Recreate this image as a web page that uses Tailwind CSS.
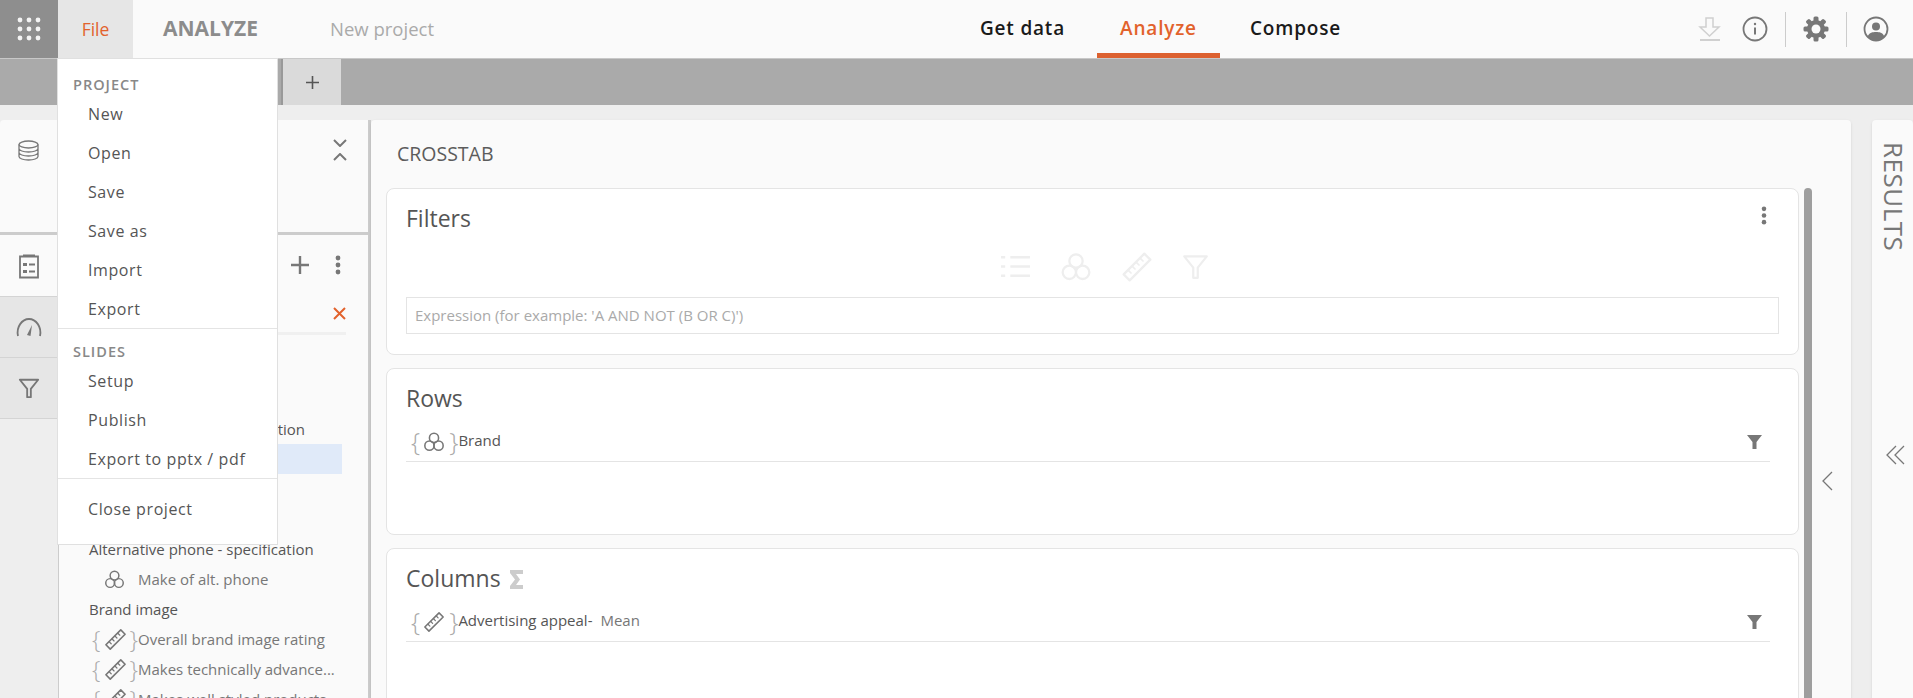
<!DOCTYPE html>
<html lang="en">
<head>
    <meta charset="UTF-8">
    <title>Crosstab</title>
    <script src="https://cdn.jsdelivr.net/npm/@tailwindcss/browser@4"></script>
</head>
<body class="h-[698px] overflow-hidden bg-[#eeeeee] font-['Open_Sans',sans-serif] text-[#666]">

<!-- shared icons -->
<svg class="hidden">
    <symbol id="rings" viewBox="0 0 24 24"><g fill="none" stroke="currentColor" stroke-width="1.7"><circle cx="12" cy="7.5" r="5"/><circle cx="7" cy="16" r="5"/><circle cx="17" cy="16" r="5"/></g></symbol>
    <symbol id="ruler" viewBox="0 0 24 24"><g fill="none" stroke="currentColor" stroke-width="1.7" stroke-linejoin="round" stroke-linecap="round"><path d="M17.5 2 22 6.5 6.5 22 2 17.5Z"/><path d="M14.5 5.5l2 2M11.5 8.5l2 2M8.5 11.5l2 2M5.5 14.5l2 2" stroke-width="1.3"/></g></symbol>
    <symbol id="funnel" viewBox="0 0 24 24"><path d="M2 3h20l-8 10v9h-4v-9Z" fill="none" stroke="currentColor" stroke-width="2" stroke-linejoin="round"/></symbol>
    <symbol id="dots" viewBox="0 0 6 20"><g fill="currentColor"><circle cx="3" cy="3" r="2.4"/><circle cx="3" cy="10" r="2.4"/><circle cx="3" cy="17" r="2.4"/></g></symbol>
</svg>

<!-- top bar -->
<header class="flex h-[59px] border-b border-[#c8c8c8] bg-[#fafafa]">
    <div class="flex w-[58px] items-center justify-center bg-[#8e8e8e]">
        <svg width="24" height="24" viewBox="0 0 24 24" fill="#f4f4f4"><circle cx="3" cy="3" r="2.4"/><circle cx="12" cy="3" r="2.4"/><circle cx="21" cy="3" r="2.4"/><circle cx="3" cy="12" r="2.4"/><circle cx="12" cy="12" r="2.4"/><circle cx="21" cy="12" r="2.4"/><circle cx="3" cy="21" r="2.4"/><circle cx="12" cy="21" r="2.4"/><circle cx="21" cy="21" r="2.4"/></svg>
    </div>
    <div class="flex w-[75px] items-center justify-center bg-[#e6e6e6] text-[17.500px] text-[#e2622c]">File</div>
    <div class="ml-[30px] flex w-[167px] items-center text-[21px] font-bold text-[#8c8c8c]">ANALYZE</div>
    <div class="flex w-[120px] items-center whitespace-nowrap text-[18.500px] text-[#aaaaaa]">New project</div>
    <nav class="ml-[530px] flex text-[19px] font-semibold tracking-[0.8px] text-[#1a1a1a]">
        <div class="flex w-[117px] items-center pb-[2px]">Get data</div>
        <div class="flex w-[123px] items-center justify-center border-b-[5px] border-[#dc6130] pt-[3px] text-[#e2622c]">Analyze</div>
        <div class="ml-[30px] flex items-center pb-[2px]">Compose</div>
    </nav>
    <div class="ml-auto flex items-center pr-[24px]">
        <svg width="24" height="24" viewBox="0 0 24 24" fill="none" stroke="#d0d0d0" stroke-width="1.5"><path d="M8 1h7v9h6l-9.500 9L2 10h6Z"/><path d="M2 23h20" stroke-width="2"/></svg>
        <svg class="ml-[20px]" width="26" height="26" viewBox="0 0 26 26" fill="none" stroke="#777" stroke-width="1.8"><circle cx="13" cy="13" r="11.500"/><path d="M13 11.500v7" stroke-width="2"/><circle cx="13" cy="8" r="1.200" fill="#777" stroke="none"/></svg>
        <div class="ml-[17px] h-[35px] w-px bg-[#cccccc]"></div>
        <svg class="ml-[17px]" width="26" height="26" viewBox="0 0 26 26"><g fill="#777"><circle cx="13" cy="13" r="9"/><rect x="10.500" y="0.500" width="5" height="25" rx="1.500"/><rect x="10.500" y="0.500" width="5" height="25" rx="1.500" transform="rotate(45 13 13)"/><rect x="10.500" y="0.500" width="5" height="25" rx="1.500" transform="rotate(90 13 13)"/><rect x="10.500" y="0.500" width="5" height="25" rx="1.500" transform="rotate(135 13 13)"/></g><circle cx="13" cy="13" r="4.500" fill="#fafafa"/></svg>
        <div class="ml-[17px] h-[35px] w-px bg-[#cccccc]"></div>
        <svg class="ml-[16px]" width="26" height="26" viewBox="0 0 26 26"><circle cx="13" cy="13" r="11.500" fill="none" stroke="#777" stroke-width="1.800"/><circle cx="13" cy="10.500" r="4" fill="#777"/><path d="M4.500 20.500c2-4 5-4.500 8.500-4.500s6.500.5 8.500 4.500c-2 2.500-5 4.500-8.500 4.500s-6.500-2-8.500-4.500Z" fill="#777"/></svg>
    </div>
</header>

<!-- tab strip -->
<div class="flex h-[46px] bg-[#aaaaaa] pl-[281px]">
    <div class="flex w-[60px] items-center justify-center border-l-2 border-[#999] bg-[#dadada] pt-px text-[#555]">
        <svg width="13" height="13" viewBox="0 0 13 13" stroke="#555" stroke-width="1.600"><path d="M6.500 0v13M0 6.500h13"/></svg>
    </div>
</div>

<main class="flex h-[593px] pt-[15px]">
    <!-- left side -->
    <div class="flex w-[371px] shrink-0 flex-col border-r-[3px] border-[#cccccc]">
        <section class="flex h-[115px] shrink-0 border-b-[3px] border-[#cccccc] bg-[#fafafa] rounded-tl">
            <div class="w-[58px] pl-[18px] pt-[20px]">
                <svg width="21" height="21" viewBox="0 0 21 21" fill="none" stroke="#777" stroke-width="1.300"><ellipse cx="10.500" cy="4.500" rx="9.500" ry="3.500"/><path d="M1 4.500v12c0 2 4.300 3.500 9.500 3.500s9.500-1.500 9.500-3.500v-12M1 8.500c0 2 4.300 3.500 9.500 3.500s9.500-1.500 9.500-3.500M1 12.500c0 2 4.300 3.500 9.500 3.500s9.500-1.500 9.500-3.500"/></svg>
            </div>
            <div class="ml-auto flex w-[37px] flex-col gap-[6px] pt-[19px] pl-[2px]">
                <svg width="14" height="8" viewBox="0 0 14 8" fill="none" stroke="#777" stroke-width="2"><path d="M1 1l6 6 6-6"/></svg>
                <svg width="14" height="8" viewBox="0 0 14 8" fill="none" stroke="#777" stroke-width="2"><path d="M1 7l6-6 6 6"/></svg>
            </div>
        </section>
        <section class="flex min-h-0 flex-1">
            <div class="w-[58px] shrink-0 bg-[#eeeeee]">
                <div class="flex h-[62px] items-center justify-center bg-[#fafafa] border-b border-[#d4d4d4]">
                    <svg width="22" height="26" viewBox="0 0 22 26" fill="none" stroke="#777" stroke-width="1.800"><path d="M5 3.500H2v21h18v-21h-3"/><rect x="5" y="1.500" width="12" height="3" fill="#777" stroke="none"/><path d="M5 10h4v3H5ZM5 17h4v3H5Z" fill="#777" stroke="none"/><path d="M11 11.500h6M11 18.500h6"/></svg>
                </div>
                <div class="flex h-[61px] items-center justify-center bg-[#e6e6e6] border-b border-[#d4d4d4]">
                    <svg width="28" height="20" viewBox="0 0 28 20" fill="none" stroke="#777" stroke-width="1.800"><path d="M3 19C1 10 7 2 14 2s13 8 11 17"/><path d="M12 18l5-10-1.500 11Z" fill="#777" stroke="none"/></svg>
                </div>
                <div class="flex h-[61px] items-center justify-center bg-[#e6e6e6] border-b border-[#d4d4d4] text-[#777]">
                    <svg width="22" height="22"><use href="#funnel"/></svg>
                </div>
            </div>
            <div class="min-w-0 flex-1 border-l border-[#cccccc] bg-[#fafafa] text-[15px]">
                <div class="flex h-[59px] items-center justify-end gap-[26px] pr-[27px] text-[#777]">
                    <svg width="18" height="18" viewBox="0 0 18 18" stroke="#777" stroke-width="2.400"><path d="M9 0v18M0 9h18"/></svg>
                    <svg width="6" height="20"><use href="#dots"/></svg>
                </div>
                <div class="ml-[24px] mr-[22px] flex h-[41px] items-center justify-end border-b-[3px] border-[#f0f0f0]">
                    <svg width="13" height="13" viewBox="0 0 13 13" stroke="#e2622c" stroke-width="2"><path d="M1 1l11 11M12 1 1 12"/></svg>
                </div>
                <div class="mt-[79px] flex h-[30px] w-[246px] items-center justify-end whitespace-nowrap pt-[1px] text-[15px] font-medium text-[#555]">Device - specification</div>
                <div class="h-[30px] w-[283px] bg-[#e0eaf9]"></div>
                <div class="h-[60px]"></div>
                <div class="flex h-[30px] items-center pl-[30px] text-[15px] font-medium whitespace-nowrap text-[#555]">Alternative phone - specification</div>
                <div class="flex h-[30px] items-center whitespace-nowrap pl-[45px] text-[15px] text-[#777]">
                    <svg class="text-[#777]" width="21" height="21"><use href="#rings"/></svg>
                    <span class="ml-[13px]">Make of alt. phone</span>
                </div>
                <div class="flex h-[30px] items-center pl-[30px] pt-[1px] text-[15px] font-medium text-[#555]">Brand image</div>
                <div class="flex h-[30px] items-center whitespace-nowrap pl-[33px] text-[#777]">
                    <span class="text-[24px] font-light leading-none text-[#aaa]">{</span>
                    <svg class="ml-[4px]" width="23" height="23"><use href="#ruler"/></svg>
                    <span class="ml-[2px] text-[24px] font-light leading-none text-[#aaa]">}</span>
                    <span>Overall brand image rating</span>
                </div>
                <div class="flex h-[30px] items-center whitespace-nowrap pl-[33px] text-[#777]">
                    <span class="text-[24px] font-light leading-none text-[#aaa]">{</span>
                    <svg class="ml-[4px]" width="23" height="23"><use href="#ruler"/></svg>
                    <span class="ml-[2px] text-[24px] font-light leading-none text-[#aaa]">}</span>
                    <span>Makes technically advance...</span>
                </div>
                <div class="flex h-[30px] items-center whitespace-nowrap pl-[33px] text-[#777]">
                    <span class="text-[24px] font-light leading-none text-[#aaa]">{</span>
                    <svg class="ml-[4px]" width="23" height="23"><use href="#ruler"/></svg>
                    <span class="ml-[2px] text-[24px] font-light leading-none text-[#aaa]">}</span>
                    <span>Makes well styled products</span>
                </div>
            </div>
        </section>
    </div>

    <!-- crosstab -->
    <div class="flex min-w-0 flex-1 rounded-t bg-[#fafafa] shadow-sm">
        <div class="w-[1428px] shrink-0 pl-[15px]">
            <div class="flex h-[68px] items-center pl-[11px] text-[19.500px] font-medium text-[#5c5c5c]">CROSSTAB</div>
            <div class="relative h-[167px] rounded-[8px] border border-[#e4e4e4] bg-white px-[19px]">
                <h2 class="pt-[14px] text-[23px] leading-[30px] text-[#555]">Filters</h2>
                <svg class="absolute right-[31px] top-[17px] text-[#777]" width="6" height="19"><use href="#dots"/></svg>
                <div class="mt-[21px] flex h-[25px] items-center justify-center gap-[29px] pl-[24px] text-[#eeeeee]">
                    <svg width="31" height="25" viewBox="0 0 30 24" fill="none" stroke="currentColor" stroke-width="2.500"><path d="M1 3h4M10 3h19M1 12h4M10 12h19M1 21h4M10 21h19"/></svg>
                    <svg width="32" height="32"><use href="#rings"/></svg>
                    <svg width="32" height="32"><use href="#ruler"/></svg>
                    <svg width="27" height="27"><use href="#funnel"/></svg>
                </div>
                <div class="mt-[18px] flex h-[37px] items-center border border-[#e4e4e4] pl-[8px] text-[15px] text-[#aaaaaa]">Expression (for example: 'A AND NOT (B OR C)')</div>
            </div>
            <div class="mt-[13px] h-[167px] rounded-[8px] border border-[#e4e4e4] bg-white px-[19px]">
                <h2 class="pt-[14px] text-[23px] leading-[30px] text-[#555]">Rows</h2>
                <div class="mr-[9px] mt-[12px] flex h-[37px] items-center border-b border-[#e4e4e4] pb-[2px] text-[15px] text-[#555]">
                    <span class="mb-[2px] ml-[5px] text-[26px] font-light leading-none text-[#aaa]">{</span>
                    <svg class="ml-[3px] text-[#777]" width="22" height="22"><use href="#rings"/></svg>
                    <span class="mb-[2px] ml-[4px] text-[26px] font-light leading-none text-[#aaa]">}</span>
                    <span class="mb-[3px]">Brand</span>
                    <svg class="ml-auto mr-[8px]" width="15" height="14" viewBox="0 0 15 14" fill="#777"><path d="M0 0h15L9.500 7v7h-4V7Z"/></svg>
                </div>
            </div>
            <div class="mt-[13px] h-[167px] rounded-t-[8px] border border-[#e4e4e4] bg-white px-[19px]">
                <h2 class="flex items-center gap-[9px] pt-[14px] text-[23px] leading-[30px] text-[#555]">Columns
                    <svg class="mt-[3px]" width="13" height="19" viewBox="0 0 13 19" fill="#cccccc"><path d="M0 0h13v4H6l4 5.500L6 15h7v4H0v-3l5-6.500L0 3Z"/></svg>
                </h2>
                <div class="mr-[9px] mt-[12px] flex h-[37px] items-center border-b border-[#e4e4e4] pb-[2px] text-[15px] text-[#555]">
                    <span class="mb-[2px] ml-[5px] text-[26px] font-light leading-none text-[#aaa]">{</span>
                    <svg class="ml-[3px] text-[#777]" width="22" height="22"><use href="#ruler"/></svg>
                    <span class="mb-[2px] ml-[4px] text-[26px] font-light leading-none text-[#aaa]">}</span>
                    <span class="mb-[3px]">Advertising appeal-</span>
                    <span class="mb-[3px] ml-[8px] text-[#777]">Mean</span>
                    <svg class="ml-auto mr-[8px]" width="15" height="14" viewBox="0 0 15 14" fill="#777"><path d="M0 0h15L9.500 7v7h-4V7Z"/></svg>
                </div>
            </div>
        </div>
        <div class="ml-[5px] mt-[68px] w-[8px] rounded-t bg-[#9e9e9e]"></div>
        <div class="flex flex-1 justify-center pr-[10px] pt-[351px]">
            <svg width="12" height="20" viewBox="0 0 12 20" fill="none" stroke="#777" stroke-width="1.300"><path d="M11 1 2 10l9 9"/></svg>
        </div>
    </div>

    <!-- results rail -->
    <div class="ml-[21px] flex w-[41px] shrink-0 flex-col items-center rounded-t bg-[#fafafa] shadow-sm">
        <div class="ml-[2px] mt-[22px] text-[26px] leading-none tracking-[0.5px] text-[#777] [writing-mode:vertical-rl]">RESULTS</div>
        <svg class="ml-[6px] mt-[194px]" width="20" height="20" viewBox="0 0 20 20" fill="none" stroke="#777" stroke-width="1.300"><path d="M10 1 1 10l9 9M18 1 9 10l9 9"/></svg>
    </div>
</main>

<!-- file menu -->
<div class="absolute left-[57px] top-[58px] h-[487px] w-[221px] border border-[#e0e0e0] bg-white text-[16px] tracking-[0.6px] text-[#555]">
    <div class="flex h-[35px] items-end pl-[15px] text-[14.500px] font-semibold leading-[18px] tracking-[1px] text-[#888]">PROJECT</div>
    <div class="flex h-[39.200px] items-center pl-[30px]">New</div>
    <div class="flex h-[39.200px] items-center pl-[30px]">Open</div>
    <div class="flex h-[39.200px] items-center pl-[30px]">Save</div>
    <div class="flex h-[39.200px] items-center pl-[30px]">Save as</div>
    <div class="flex h-[39.200px] items-center pl-[30px]">Import</div>
    <div class="flex h-[39.200px] items-center border-b border-[#e4e4e4] pl-[30px]">Export</div>
    <div class="flex h-[32px] items-end pl-[15px] text-[14.500px] font-semibold leading-[18px] tracking-[1px] text-[#888]">SLIDES</div>
    <div class="flex h-[39.200px] items-center pl-[30px]">Setup</div>
    <div class="flex h-[39.200px] items-center pl-[30px]">Publish</div>
    <div class="flex h-[39.200px] items-center border-b border-[#e4e4e4] pl-[30px]">Export to pptx / pdf</div>
    <div class="mt-[11px] flex h-[39px] items-center pl-[30px]">Close project</div>
</div>

</body>
</html>
